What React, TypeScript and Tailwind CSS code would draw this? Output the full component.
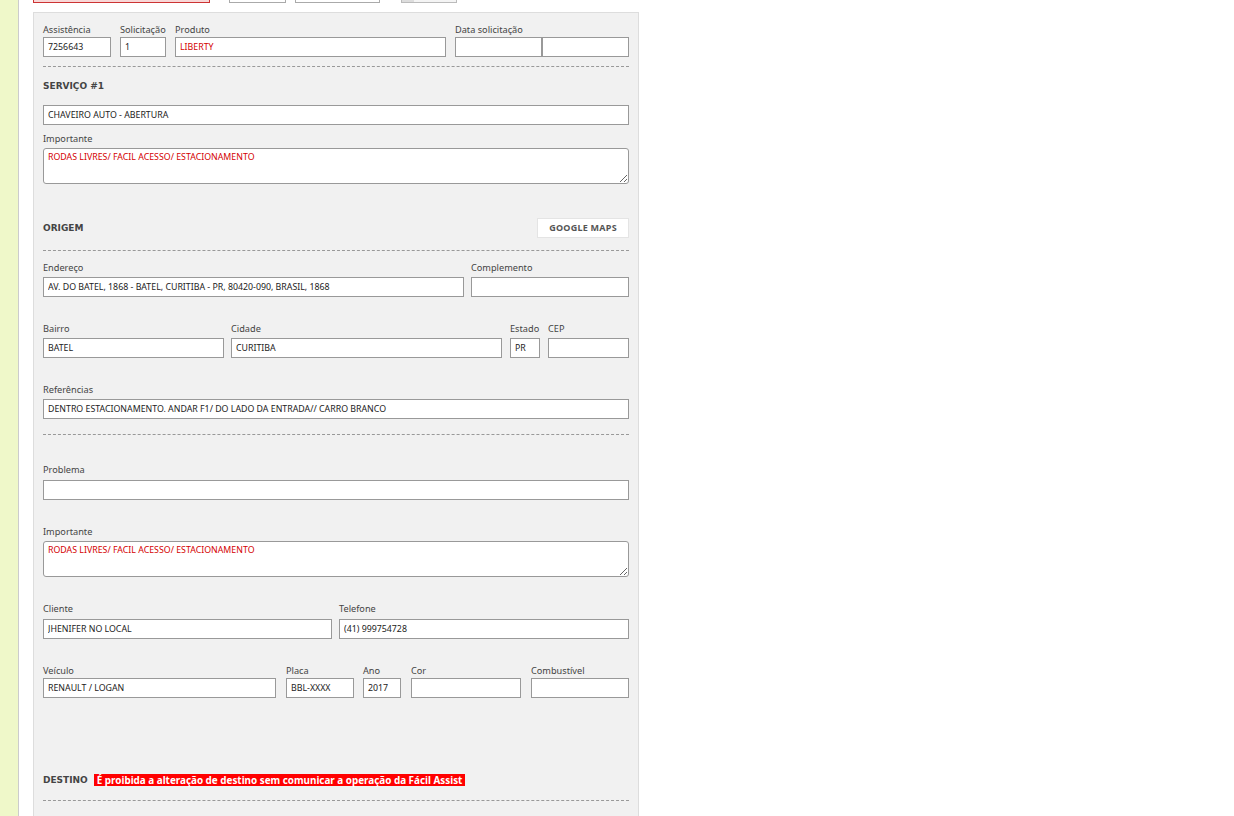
import React from 'react';

const inputClass =
  'block w-full h-[20px] border border-[#999] bg-white px-[4px] text-[8.8px] text-[#222] outline-none';

const labelClass = 'h-[14px] leading-[16px] text-[9.2px] text-[#444] whitespace-nowrap';

const titleClass = "font-['DejaVu_Sans',sans-serif] text-[9px] font-bold text-[#444]";

function Field({
  label,
  value = '',
  width,
  red = false,
  labelGap = 'mb-[3px]',
}: {
  label: string;
  value?: string;
  width: string;
  red?: boolean;
  labelGap?: string;
}): React.ReactElement {
  return (
    <div className={`shrink-0 ${width}`}>
      <div className={`${labelClass} ${labelGap}`}>{label}</div>
      <input readOnly value={value} className={red ? `${inputClass} text-[#d40000]` : inputClass} />
    </div>
  );
}

function Dashed({ className }: { className: string }): React.ReactElement {
  return <div className={`border-t border-dashed border-[#999] ${className}`} />;
}

function Important({ className }: { className: string }): React.ReactElement {
  return (
    <div className={className}>
      <div className={`${labelClass} mb-[3px]`}>Importante</div>
      <textarea
        readOnly
        value="RODAS LIVRES/ FACIL ACESSO/ ESTACIONAMENTO"
        className="block w-full h-[36px] rounded-[3px] border border-[#999] bg-white px-[4px] py-[2px] text-[8.8px] leading-[12px] text-[#d40000] outline-none resize-y"
      />
    </div>
  );
}

export default function App(): React.ReactElement {
  return (
    <div className="h-[816px] overflow-hidden flex bg-white font-['Noto_Sans',sans-serif]">
      <div className="w-[19px] shrink-0 bg-[#eff8c9] border-r border-[#ccc]" />
      <div className="ml-[14px] w-[606px] shrink-0">
        <div className="h-[3px] overflow-hidden flex items-end mb-[9px]">
          <div className="w-[177px] h-[20px] shrink-0 border border-[#c33] bg-[#f8d7d7]" />
          <div className="ml-[19px] w-[57px] h-[20px] shrink-0 border border-[#aaa] bg-white" />
          <div className="ml-[9px] w-[85px] h-[20px] shrink-0 border border-[#aaa] bg-white" />
          <div className="ml-[21px] w-[56px] h-[20px] shrink-0 flex border border-[#bbb] bg-[#f4f4f4]">
            <div className="w-[12px] bg-[#ddd]" />
          </div>
        </div>

        <div className="border border-[#ddd] bg-[#f1f1f1] px-[9px] pt-[9px] pb-[40px]">
          <div className="flex">
            <Field label="Assistência" value="7256643" width="w-[68px]" labelGap="mb-px" />
            <Field label="Solicitação" value="1" width="w-[46px] ml-[9px]" labelGap="mb-px" />
            <Field label="Produto" value="LIBERTY" width="w-[271px] ml-[9px]" red labelGap="mb-px" />
            <Field label="Data solicitação" width="w-[87px] ml-[9px]" labelGap="mb-px" />
            <Field label="" width="w-[87px]" labelGap="mb-px" />
          </div>
          <Dashed className="mt-[9px]" />

          <div className={`mt-[11px] h-[14px] leading-[16px] ${titleClass}`}>SERVIÇO #1</div>
          <input readOnly value="CHAVEIRO AUTO - ABERTURA" className={`${inputClass} mt-[13px]`} />
          <Important className="mt-[6px]" />

          <div className="mt-[34px] flex items-center justify-between">
            <div className={`${titleClass} pt-px`}>ORIGEM</div>
            <button className="w-[92px] h-[20px] border border-[#e4e4e4] bg-white text-[9px] font-bold tracking-[0.25px] text-[#555]">
              GOOGLE MAPS
            </button>
          </div>
          <Dashed className="mt-[12px]" />

          <div className="mt-[9px] flex gap-[7px]">
            <Field label="Endereço" value="AV. DO BATEL, 1868 - BATEL, CURITIBA - PR, 80420-090, BRASIL, 1868" width="w-[421px]" />
            <Field label="Complemento" width="w-[158px]" />
          </div>
          <div className="mt-[24px] flex">
            <Field label="Bairro" value="BATEL" width="w-[181px]" />
            <Field label="Cidade" value="CURITIBA" width="w-[271px] ml-[7px]" />
            <Field label="Estado" value="PR" width="w-[30px] ml-[8px]" />
            <Field label="CEP" width="w-[81px] ml-[8px]" />
          </div>
          <div className="mt-[24px]">
            <Field label="Referências" value="DENTRO ESTACIONAMENTO. ANDAR F1/ DO LADO DA ENTRADA// CARRO BRANCO" width="w-full" />
          </div>
          <Dashed className="mt-[15px]" />

          <div className="mt-[27px]">
            <Field label="Problema" width="w-full" labelGap="mb-[4px]" />
          </div>
          <Important className="mt-[24px]" />

          <div className="mt-[24px] flex gap-[7px]">
            <Field label="Cliente" value="JHENIFER NO LOCAL" width="w-[289px]" labelGap="mb-[4px]" />
            <Field label="Telefone" value="(41) 999754728" width="w-[290px]" labelGap="mb-[4px]" />
          </div>
          <div className="mt-[24px] flex">
            <Field label="Veículo" value="RENAULT / LOGAN" width="w-[233px]" labelGap="mb-px" />
            <Field label="Placa" value="BBL-XXXX" width="w-[68px] ml-[10px]" labelGap="mb-px" />
            <Field label="Ano" value="2017" width="w-[38px] ml-[9px]" labelGap="mb-px" />
            <Field label="Cor" width="w-[110px] ml-[10px]" labelGap="mb-px" />
            <Field label="Combustível" width="w-[98px] ml-[10px]" labelGap="mb-px" />
          </div>

          <div className="mt-[75px] h-[14px] flex items-center">
            <span className={`${titleClass} pt-[2px]`}>DESTINO</span>
            <span className="ml-[6px] h-[12px] leading-[12px] px-[3px] bg-[#f00] text-[9.87px] font-bold text-white whitespace-nowrap">
              É proibida a alteração de destino sem comunicar a operação da Fácil Assist
            </span>
          </div>
          <Dashed className="mt-[13px]" />
        </div>
      </div>
    </div>
  );
}
